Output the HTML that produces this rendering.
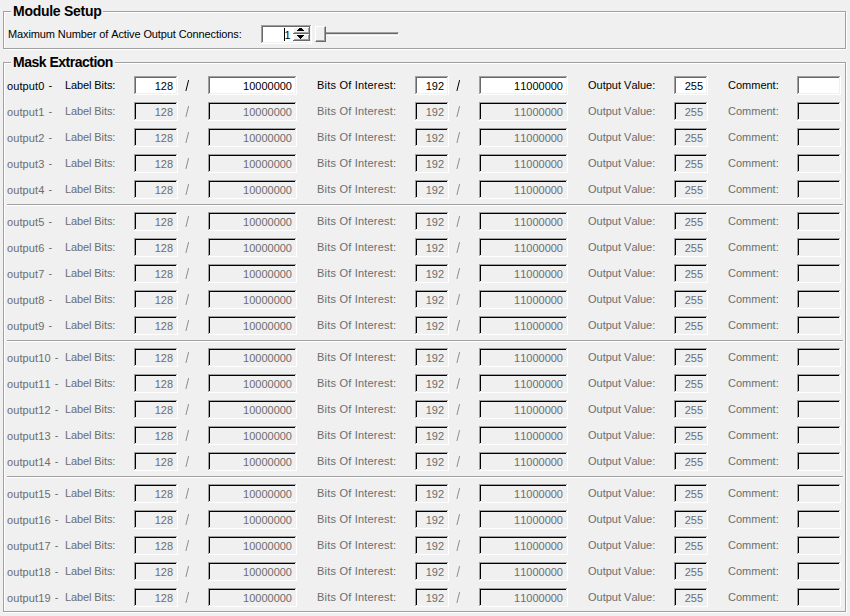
<!DOCTYPE html>
<html><head><meta charset="utf-8"><style>
*{margin:0;padding:0}
html,body{width:850px;height:616px;overflow:hidden;background:#f0f0f0}
body{position:relative;font-family:"Liberation Sans",sans-serif;font-size:11px;color:#000;font-kerning:none}
.a{position:absolute}
.t{position:absolute;white-space:nowrap;line-height:13px;font-size:11px}
.d{color:#6d6d6d}
.gw{position:absolute;border:1px solid #fff;box-sizing:border-box}
.gg{position:absolute;border:1px solid #a0a0a0;box-sizing:border-box}
.ttl{position:absolute;background:#f0f0f0;font-weight:bold;font-size:14px;line-height:16px;white-space:nowrap}
.e{position:absolute;height:19px;background:linear-gradient(#fff,#fff) 0 100%/100% 1px no-repeat,linear-gradient(#fff,#fff) 100% 0/1px 100% no-repeat,linear-gradient(#f0f0f0,#f0f0f0) 1px calc(100% - 1px)/calc(100% - 2px) 1px no-repeat,linear-gradient(#f0f0f0,#f0f0f0) calc(100% - 1px) 1px/1px calc(100% - 2px) no-repeat,linear-gradient(#a0a0a0,#a0a0a0) 0 0/100% 1px no-repeat,linear-gradient(#a0a0a0,#a0a0a0) 0 0/1px 100% no-repeat,linear-gradient(#696969,#696969) 1px 1px/100% 1px no-repeat,linear-gradient(#696969,#696969) 1px 1px/1px 100% no-repeat,#fff}
.e.x{background:linear-gradient(#fff,#fff) 0 100%/100% 1px no-repeat,linear-gradient(#fff,#fff) 100% 0/1px 100% no-repeat,linear-gradient(#a0a0a0,#a0a0a0) 0 0/100% 1px no-repeat,linear-gradient(#a0a0a0,#a0a0a0) 0 0/1px 100% no-repeat,linear-gradient(#000,#000) 1px 1px/calc(100% - 3px) 1px no-repeat,linear-gradient(#000,#000) 1px 1px/1px calc(100% - 3px) no-repeat,#f0f0f0}
.v{position:absolute;right:5px;top:4px;line-height:13px;white-space:nowrap}
.sep{position:absolute;left:7px;width:836px;height:2px;border-top:1px solid #a0a0a0;border-bottom:1px solid #fff;box-sizing:border-box}
.sl{position:absolute;width:5px;height:11px}
</style></head><body>
<div class="gw" style="left:4px;top:12px;width:843px;height:38px"></div>
<div class="gg" style="left:3px;top:11px;width:843px;height:38px"></div>
<div class="ttl" style="left:11px;top:3px;padding:0 1px 0 2px;letter-spacing:-0.27px">Module Setup</div>
<div class="gw" style="left:4px;top:63px;width:843px;height:550px"></div>
<div class="gg" style="left:3px;top:62px;width:843px;height:550px"></div>
<div class="ttl" style="left:11px;top:54px;padding:0 2px 0 2px;letter-spacing:-0.5px">Mask Extraction</div>
<div class="t" style="left:8px;top:28px;letter-spacing:-0.11px">Maximum Number of Active Output Connections:</div>
<div class="e" style="left:261px;top:25px;width:51px;height:19px"></div>
<div class="a" style="left:284px;top:28px;width:1px;height:13px;background:#000"></div>
<div class="t" style="left:284.4px;top:29px">1</div>
<svg class="a" style="left:293px;top:27px" width="17" height="14" shape-rendering="crispEdges"><rect x="0" y="0" width="17" height="7" fill="#fff"/><rect x="1" y="1" width="15" height="5" fill="#f0f0f0"/><rect x="15" y="1" width="1" height="5" fill="#a0a0a0"/><rect x="1" y="5" width="15" height="1" fill="#a0a0a0"/><rect x="16" y="0" width="1" height="7" fill="#696969"/><rect x="0" y="6" width="17" height="1" fill="#696969"/><rect x="0" y="7" width="17" height="7" fill="#fff"/><rect x="1" y="8" width="15" height="5" fill="#f0f0f0"/><rect x="15" y="8" width="1" height="5" fill="#a0a0a0"/><rect x="1" y="12" width="15" height="1" fill="#a0a0a0"/><rect x="16" y="7" width="1" height="7" fill="#696969"/><rect x="0" y="13" width="17" height="1" fill="#696969"/><rect x="6" y="1" width="3" height="1" fill="#000"/><rect x="5" y="2" width="5" height="1" fill="#000"/><rect x="4" y="3" width="7" height="1" fill="#000"/><rect x="4" y="8" width="7" height="1" fill="#000"/><rect x="5" y="9" width="5" height="1" fill="#000"/><rect x="6" y="10" width="3" height="1" fill="#000"/><rect x="7" y="11" width="1" height="1" fill="#000"/></svg>
<div class="a" style="left:320px;top:32px;width:79px;height:4px;box-sizing:border-box;border:1px solid;border-color:#a0a0a0 #fff #fff #a0a0a0;box-shadow:inset 1px 1px 0 #696969,inset -1px -1px 0 #e3e3e3"></div>
<div class="a" style="left:315px;top:26px;width:11px;height:16px;box-sizing:border-box;background:#f0f0f0;border:1px solid;border-color:#fff #696969 #696969 #fff;box-shadow:inset -1px -1px 0 #a0a0a0"></div>
<div class="sep" style="top:204px"></div>
<div class="sep" style="top:340px"></div>
<div class="sep" style="top:476px"></div>
<div class="t" style="left:7px;top:80px;letter-spacing:0.1px">output0<span style="margin-left:4px;position:relative;top:-1px">-</span></div>
<div class="t" style="left:65px;top:79px;letter-spacing:-0.1px">Label Bits:</div>
<div class="e" style="left:134px;top:76px;width:44px"><span class="v">128</span></div>
<svg class="sl" style="left:185px;top:80px" width="5" height="11"><line x1="0.9" y1="10.9" x2="3.6" y2="0.1" stroke="#000" stroke-width="1.0"/></svg>
<div class="e" style="left:208px;top:76px;width:89px"><span class="v">10000000</span></div>
<div class="t" style="left:317px;top:79px;letter-spacing:0.2px">Bits Of Interest:</div>
<div class="e" style="left:415px;top:76px;width:34px"><span class="v">192</span></div>
<svg class="sl" style="left:456px;top:80px" width="5" height="11"><line x1="0.9" y1="10.9" x2="3.6" y2="0.1" stroke="#000" stroke-width="1.0"/></svg>
<div class="e" style="left:479px;top:76px;width:89px"><span class="v">11000000</span></div>
<div class="t" style="left:588px;top:79px">Output Value:</div>
<div class="e" style="left:674px;top:76px;width:34px"><span class="v">255</span></div>
<div class="t" style="left:728px;top:79px">Comment:</div>
<div class="e" style="left:797px;top:76px;width:44px"></div>
<div class="t d" style="left:7px;top:106px;letter-spacing:0.1px">output1<span style="margin-left:4px;position:relative;top:-1px">-</span></div>
<div class="t d" style="left:65px;top:105px;letter-spacing:-0.1px">Label Bits:</div>
<div class="e x" style="left:134px;top:102px;width:44px"><span class="v d">128</span></div>
<svg class="sl" style="left:185px;top:106px" width="5" height="11"><line x1="0.9" y1="10.9" x2="3.6" y2="0.1" stroke="#8c8c8c" stroke-width="1.0"/></svg>
<div class="e x" style="left:208px;top:102px;width:89px"><span class="v d">10000000</span></div>
<div class="t d" style="left:317px;top:105px;letter-spacing:0.2px">Bits Of Interest:</div>
<div class="e x" style="left:415px;top:102px;width:34px"><span class="v d">192</span></div>
<svg class="sl" style="left:456px;top:106px" width="5" height="11"><line x1="0.9" y1="10.9" x2="3.6" y2="0.1" stroke="#8c8c8c" stroke-width="1.0"/></svg>
<div class="e x" style="left:479px;top:102px;width:89px"><span class="v d">11000000</span></div>
<div class="t d" style="left:588px;top:105px">Output Value:</div>
<div class="e x" style="left:674px;top:102px;width:34px"><span class="v d">255</span></div>
<div class="t d" style="left:728px;top:105px">Comment:</div>
<div class="e x" style="left:797px;top:102px;width:44px"></div>
<div class="t d" style="left:7px;top:132px;letter-spacing:0.1px">output2<span style="margin-left:4px;position:relative;top:-1px">-</span></div>
<div class="t d" style="left:65px;top:131px;letter-spacing:-0.1px">Label Bits:</div>
<div class="e x" style="left:134px;top:128px;width:44px"><span class="v d">128</span></div>
<svg class="sl" style="left:185px;top:132px" width="5" height="11"><line x1="0.9" y1="10.9" x2="3.6" y2="0.1" stroke="#8c8c8c" stroke-width="1.0"/></svg>
<div class="e x" style="left:208px;top:128px;width:89px"><span class="v d">10000000</span></div>
<div class="t d" style="left:317px;top:131px;letter-spacing:0.2px">Bits Of Interest:</div>
<div class="e x" style="left:415px;top:128px;width:34px"><span class="v d">192</span></div>
<svg class="sl" style="left:456px;top:132px" width="5" height="11"><line x1="0.9" y1="10.9" x2="3.6" y2="0.1" stroke="#8c8c8c" stroke-width="1.0"/></svg>
<div class="e x" style="left:479px;top:128px;width:89px"><span class="v d">11000000</span></div>
<div class="t d" style="left:588px;top:131px">Output Value:</div>
<div class="e x" style="left:674px;top:128px;width:34px"><span class="v d">255</span></div>
<div class="t d" style="left:728px;top:131px">Comment:</div>
<div class="e x" style="left:797px;top:128px;width:44px"></div>
<div class="t d" style="left:7px;top:158px;letter-spacing:0.1px">output3<span style="margin-left:4px;position:relative;top:-1px">-</span></div>
<div class="t d" style="left:65px;top:157px;letter-spacing:-0.1px">Label Bits:</div>
<div class="e x" style="left:134px;top:154px;width:44px"><span class="v d">128</span></div>
<svg class="sl" style="left:185px;top:158px" width="5" height="11"><line x1="0.9" y1="10.9" x2="3.6" y2="0.1" stroke="#8c8c8c" stroke-width="1.0"/></svg>
<div class="e x" style="left:208px;top:154px;width:89px"><span class="v d">10000000</span></div>
<div class="t d" style="left:317px;top:157px;letter-spacing:0.2px">Bits Of Interest:</div>
<div class="e x" style="left:415px;top:154px;width:34px"><span class="v d">192</span></div>
<svg class="sl" style="left:456px;top:158px" width="5" height="11"><line x1="0.9" y1="10.9" x2="3.6" y2="0.1" stroke="#8c8c8c" stroke-width="1.0"/></svg>
<div class="e x" style="left:479px;top:154px;width:89px"><span class="v d">11000000</span></div>
<div class="t d" style="left:588px;top:157px">Output Value:</div>
<div class="e x" style="left:674px;top:154px;width:34px"><span class="v d">255</span></div>
<div class="t d" style="left:728px;top:157px">Comment:</div>
<div class="e x" style="left:797px;top:154px;width:44px"></div>
<div class="t d" style="left:7px;top:184px;letter-spacing:0.1px">output4<span style="margin-left:4px;position:relative;top:-1px">-</span></div>
<div class="t d" style="left:65px;top:183px;letter-spacing:-0.1px">Label Bits:</div>
<div class="e x" style="left:134px;top:180px;width:44px"><span class="v d">128</span></div>
<svg class="sl" style="left:185px;top:184px" width="5" height="11"><line x1="0.9" y1="10.9" x2="3.6" y2="0.1" stroke="#8c8c8c" stroke-width="1.0"/></svg>
<div class="e x" style="left:208px;top:180px;width:89px"><span class="v d">10000000</span></div>
<div class="t d" style="left:317px;top:183px;letter-spacing:0.2px">Bits Of Interest:</div>
<div class="e x" style="left:415px;top:180px;width:34px"><span class="v d">192</span></div>
<svg class="sl" style="left:456px;top:184px" width="5" height="11"><line x1="0.9" y1="10.9" x2="3.6" y2="0.1" stroke="#8c8c8c" stroke-width="1.0"/></svg>
<div class="e x" style="left:479px;top:180px;width:89px"><span class="v d">11000000</span></div>
<div class="t d" style="left:588px;top:183px">Output Value:</div>
<div class="e x" style="left:674px;top:180px;width:34px"><span class="v d">255</span></div>
<div class="t d" style="left:728px;top:183px">Comment:</div>
<div class="e x" style="left:797px;top:180px;width:44px"></div>
<div class="t d" style="left:7px;top:216px;letter-spacing:0.1px">output5<span style="margin-left:4px;position:relative;top:-1px">-</span></div>
<div class="t d" style="left:65px;top:215px;letter-spacing:-0.1px">Label Bits:</div>
<div class="e x" style="left:134px;top:212px;width:44px"><span class="v d">128</span></div>
<svg class="sl" style="left:185px;top:216px" width="5" height="11"><line x1="0.9" y1="10.9" x2="3.6" y2="0.1" stroke="#8c8c8c" stroke-width="1.0"/></svg>
<div class="e x" style="left:208px;top:212px;width:89px"><span class="v d">10000000</span></div>
<div class="t d" style="left:317px;top:215px;letter-spacing:0.2px">Bits Of Interest:</div>
<div class="e x" style="left:415px;top:212px;width:34px"><span class="v d">192</span></div>
<svg class="sl" style="left:456px;top:216px" width="5" height="11"><line x1="0.9" y1="10.9" x2="3.6" y2="0.1" stroke="#8c8c8c" stroke-width="1.0"/></svg>
<div class="e x" style="left:479px;top:212px;width:89px"><span class="v d">11000000</span></div>
<div class="t d" style="left:588px;top:215px">Output Value:</div>
<div class="e x" style="left:674px;top:212px;width:34px"><span class="v d">255</span></div>
<div class="t d" style="left:728px;top:215px">Comment:</div>
<div class="e x" style="left:797px;top:212px;width:44px"></div>
<div class="t d" style="left:7px;top:242px;letter-spacing:0.1px">output6<span style="margin-left:4px;position:relative;top:-1px">-</span></div>
<div class="t d" style="left:65px;top:241px;letter-spacing:-0.1px">Label Bits:</div>
<div class="e x" style="left:134px;top:238px;width:44px"><span class="v d">128</span></div>
<svg class="sl" style="left:185px;top:242px" width="5" height="11"><line x1="0.9" y1="10.9" x2="3.6" y2="0.1" stroke="#8c8c8c" stroke-width="1.0"/></svg>
<div class="e x" style="left:208px;top:238px;width:89px"><span class="v d">10000000</span></div>
<div class="t d" style="left:317px;top:241px;letter-spacing:0.2px">Bits Of Interest:</div>
<div class="e x" style="left:415px;top:238px;width:34px"><span class="v d">192</span></div>
<svg class="sl" style="left:456px;top:242px" width="5" height="11"><line x1="0.9" y1="10.9" x2="3.6" y2="0.1" stroke="#8c8c8c" stroke-width="1.0"/></svg>
<div class="e x" style="left:479px;top:238px;width:89px"><span class="v d">11000000</span></div>
<div class="t d" style="left:588px;top:241px">Output Value:</div>
<div class="e x" style="left:674px;top:238px;width:34px"><span class="v d">255</span></div>
<div class="t d" style="left:728px;top:241px">Comment:</div>
<div class="e x" style="left:797px;top:238px;width:44px"></div>
<div class="t d" style="left:7px;top:268px;letter-spacing:0.1px">output7<span style="margin-left:4px;position:relative;top:-1px">-</span></div>
<div class="t d" style="left:65px;top:267px;letter-spacing:-0.1px">Label Bits:</div>
<div class="e x" style="left:134px;top:264px;width:44px"><span class="v d">128</span></div>
<svg class="sl" style="left:185px;top:268px" width="5" height="11"><line x1="0.9" y1="10.9" x2="3.6" y2="0.1" stroke="#8c8c8c" stroke-width="1.0"/></svg>
<div class="e x" style="left:208px;top:264px;width:89px"><span class="v d">10000000</span></div>
<div class="t d" style="left:317px;top:267px;letter-spacing:0.2px">Bits Of Interest:</div>
<div class="e x" style="left:415px;top:264px;width:34px"><span class="v d">192</span></div>
<svg class="sl" style="left:456px;top:268px" width="5" height="11"><line x1="0.9" y1="10.9" x2="3.6" y2="0.1" stroke="#8c8c8c" stroke-width="1.0"/></svg>
<div class="e x" style="left:479px;top:264px;width:89px"><span class="v d">11000000</span></div>
<div class="t d" style="left:588px;top:267px">Output Value:</div>
<div class="e x" style="left:674px;top:264px;width:34px"><span class="v d">255</span></div>
<div class="t d" style="left:728px;top:267px">Comment:</div>
<div class="e x" style="left:797px;top:264px;width:44px"></div>
<div class="t d" style="left:7px;top:294px;letter-spacing:0.1px">output8<span style="margin-left:4px;position:relative;top:-1px">-</span></div>
<div class="t d" style="left:65px;top:293px;letter-spacing:-0.1px">Label Bits:</div>
<div class="e x" style="left:134px;top:290px;width:44px"><span class="v d">128</span></div>
<svg class="sl" style="left:185px;top:294px" width="5" height="11"><line x1="0.9" y1="10.9" x2="3.6" y2="0.1" stroke="#8c8c8c" stroke-width="1.0"/></svg>
<div class="e x" style="left:208px;top:290px;width:89px"><span class="v d">10000000</span></div>
<div class="t d" style="left:317px;top:293px;letter-spacing:0.2px">Bits Of Interest:</div>
<div class="e x" style="left:415px;top:290px;width:34px"><span class="v d">192</span></div>
<svg class="sl" style="left:456px;top:294px" width="5" height="11"><line x1="0.9" y1="10.9" x2="3.6" y2="0.1" stroke="#8c8c8c" stroke-width="1.0"/></svg>
<div class="e x" style="left:479px;top:290px;width:89px"><span class="v d">11000000</span></div>
<div class="t d" style="left:588px;top:293px">Output Value:</div>
<div class="e x" style="left:674px;top:290px;width:34px"><span class="v d">255</span></div>
<div class="t d" style="left:728px;top:293px">Comment:</div>
<div class="e x" style="left:797px;top:290px;width:44px"></div>
<div class="t d" style="left:7px;top:320px;letter-spacing:0.1px">output9<span style="margin-left:4px;position:relative;top:-1px">-</span></div>
<div class="t d" style="left:65px;top:319px;letter-spacing:-0.1px">Label Bits:</div>
<div class="e x" style="left:134px;top:316px;width:44px"><span class="v d">128</span></div>
<svg class="sl" style="left:185px;top:320px" width="5" height="11"><line x1="0.9" y1="10.9" x2="3.6" y2="0.1" stroke="#8c8c8c" stroke-width="1.0"/></svg>
<div class="e x" style="left:208px;top:316px;width:89px"><span class="v d">10000000</span></div>
<div class="t d" style="left:317px;top:319px;letter-spacing:0.2px">Bits Of Interest:</div>
<div class="e x" style="left:415px;top:316px;width:34px"><span class="v d">192</span></div>
<svg class="sl" style="left:456px;top:320px" width="5" height="11"><line x1="0.9" y1="10.9" x2="3.6" y2="0.1" stroke="#8c8c8c" stroke-width="1.0"/></svg>
<div class="e x" style="left:479px;top:316px;width:89px"><span class="v d">11000000</span></div>
<div class="t d" style="left:588px;top:319px">Output Value:</div>
<div class="e x" style="left:674px;top:316px;width:34px"><span class="v d">255</span></div>
<div class="t d" style="left:728px;top:319px">Comment:</div>
<div class="e x" style="left:797px;top:316px;width:44px"></div>
<div class="t d" style="left:7px;top:352px;letter-spacing:0.1px">output10<span style="margin-left:4px;position:relative;top:-1px">-</span></div>
<div class="t d" style="left:65px;top:351px;letter-spacing:-0.1px">Label Bits:</div>
<div class="e x" style="left:134px;top:348px;width:44px"><span class="v d">128</span></div>
<svg class="sl" style="left:185px;top:352px" width="5" height="11"><line x1="0.9" y1="10.9" x2="3.6" y2="0.1" stroke="#8c8c8c" stroke-width="1.0"/></svg>
<div class="e x" style="left:208px;top:348px;width:89px"><span class="v d">10000000</span></div>
<div class="t d" style="left:317px;top:351px;letter-spacing:0.2px">Bits Of Interest:</div>
<div class="e x" style="left:415px;top:348px;width:34px"><span class="v d">192</span></div>
<svg class="sl" style="left:456px;top:352px" width="5" height="11"><line x1="0.9" y1="10.9" x2="3.6" y2="0.1" stroke="#8c8c8c" stroke-width="1.0"/></svg>
<div class="e x" style="left:479px;top:348px;width:89px"><span class="v d">11000000</span></div>
<div class="t d" style="left:588px;top:351px">Output Value:</div>
<div class="e x" style="left:674px;top:348px;width:34px"><span class="v d">255</span></div>
<div class="t d" style="left:728px;top:351px">Comment:</div>
<div class="e x" style="left:797px;top:348px;width:44px"></div>
<div class="t d" style="left:7px;top:378px;letter-spacing:0.1px">output11<span style="margin-left:4px;position:relative;top:-1px">-</span></div>
<div class="t d" style="left:65px;top:377px;letter-spacing:-0.1px">Label Bits:</div>
<div class="e x" style="left:134px;top:374px;width:44px"><span class="v d">128</span></div>
<svg class="sl" style="left:185px;top:378px" width="5" height="11"><line x1="0.9" y1="10.9" x2="3.6" y2="0.1" stroke="#8c8c8c" stroke-width="1.0"/></svg>
<div class="e x" style="left:208px;top:374px;width:89px"><span class="v d">10000000</span></div>
<div class="t d" style="left:317px;top:377px;letter-spacing:0.2px">Bits Of Interest:</div>
<div class="e x" style="left:415px;top:374px;width:34px"><span class="v d">192</span></div>
<svg class="sl" style="left:456px;top:378px" width="5" height="11"><line x1="0.9" y1="10.9" x2="3.6" y2="0.1" stroke="#8c8c8c" stroke-width="1.0"/></svg>
<div class="e x" style="left:479px;top:374px;width:89px"><span class="v d">11000000</span></div>
<div class="t d" style="left:588px;top:377px">Output Value:</div>
<div class="e x" style="left:674px;top:374px;width:34px"><span class="v d">255</span></div>
<div class="t d" style="left:728px;top:377px">Comment:</div>
<div class="e x" style="left:797px;top:374px;width:44px"></div>
<div class="t d" style="left:7px;top:404px;letter-spacing:0.1px">output12<span style="margin-left:4px;position:relative;top:-1px">-</span></div>
<div class="t d" style="left:65px;top:403px;letter-spacing:-0.1px">Label Bits:</div>
<div class="e x" style="left:134px;top:400px;width:44px"><span class="v d">128</span></div>
<svg class="sl" style="left:185px;top:404px" width="5" height="11"><line x1="0.9" y1="10.9" x2="3.6" y2="0.1" stroke="#8c8c8c" stroke-width="1.0"/></svg>
<div class="e x" style="left:208px;top:400px;width:89px"><span class="v d">10000000</span></div>
<div class="t d" style="left:317px;top:403px;letter-spacing:0.2px">Bits Of Interest:</div>
<div class="e x" style="left:415px;top:400px;width:34px"><span class="v d">192</span></div>
<svg class="sl" style="left:456px;top:404px" width="5" height="11"><line x1="0.9" y1="10.9" x2="3.6" y2="0.1" stroke="#8c8c8c" stroke-width="1.0"/></svg>
<div class="e x" style="left:479px;top:400px;width:89px"><span class="v d">11000000</span></div>
<div class="t d" style="left:588px;top:403px">Output Value:</div>
<div class="e x" style="left:674px;top:400px;width:34px"><span class="v d">255</span></div>
<div class="t d" style="left:728px;top:403px">Comment:</div>
<div class="e x" style="left:797px;top:400px;width:44px"></div>
<div class="t d" style="left:7px;top:430px;letter-spacing:0.1px">output13<span style="margin-left:4px;position:relative;top:-1px">-</span></div>
<div class="t d" style="left:65px;top:429px;letter-spacing:-0.1px">Label Bits:</div>
<div class="e x" style="left:134px;top:426px;width:44px"><span class="v d">128</span></div>
<svg class="sl" style="left:185px;top:430px" width="5" height="11"><line x1="0.9" y1="10.9" x2="3.6" y2="0.1" stroke="#8c8c8c" stroke-width="1.0"/></svg>
<div class="e x" style="left:208px;top:426px;width:89px"><span class="v d">10000000</span></div>
<div class="t d" style="left:317px;top:429px;letter-spacing:0.2px">Bits Of Interest:</div>
<div class="e x" style="left:415px;top:426px;width:34px"><span class="v d">192</span></div>
<svg class="sl" style="left:456px;top:430px" width="5" height="11"><line x1="0.9" y1="10.9" x2="3.6" y2="0.1" stroke="#8c8c8c" stroke-width="1.0"/></svg>
<div class="e x" style="left:479px;top:426px;width:89px"><span class="v d">11000000</span></div>
<div class="t d" style="left:588px;top:429px">Output Value:</div>
<div class="e x" style="left:674px;top:426px;width:34px"><span class="v d">255</span></div>
<div class="t d" style="left:728px;top:429px">Comment:</div>
<div class="e x" style="left:797px;top:426px;width:44px"></div>
<div class="t d" style="left:7px;top:456px;letter-spacing:0.1px">output14<span style="margin-left:4px;position:relative;top:-1px">-</span></div>
<div class="t d" style="left:65px;top:455px;letter-spacing:-0.1px">Label Bits:</div>
<div class="e x" style="left:134px;top:452px;width:44px"><span class="v d">128</span></div>
<svg class="sl" style="left:185px;top:456px" width="5" height="11"><line x1="0.9" y1="10.9" x2="3.6" y2="0.1" stroke="#8c8c8c" stroke-width="1.0"/></svg>
<div class="e x" style="left:208px;top:452px;width:89px"><span class="v d">10000000</span></div>
<div class="t d" style="left:317px;top:455px;letter-spacing:0.2px">Bits Of Interest:</div>
<div class="e x" style="left:415px;top:452px;width:34px"><span class="v d">192</span></div>
<svg class="sl" style="left:456px;top:456px" width="5" height="11"><line x1="0.9" y1="10.9" x2="3.6" y2="0.1" stroke="#8c8c8c" stroke-width="1.0"/></svg>
<div class="e x" style="left:479px;top:452px;width:89px"><span class="v d">11000000</span></div>
<div class="t d" style="left:588px;top:455px">Output Value:</div>
<div class="e x" style="left:674px;top:452px;width:34px"><span class="v d">255</span></div>
<div class="t d" style="left:728px;top:455px">Comment:</div>
<div class="e x" style="left:797px;top:452px;width:44px"></div>
<div class="t d" style="left:7px;top:488px;letter-spacing:0.1px">output15<span style="margin-left:4px;position:relative;top:-1px">-</span></div>
<div class="t d" style="left:65px;top:487px;letter-spacing:-0.1px">Label Bits:</div>
<div class="e x" style="left:134px;top:484px;width:44px"><span class="v d">128</span></div>
<svg class="sl" style="left:185px;top:488px" width="5" height="11"><line x1="0.9" y1="10.9" x2="3.6" y2="0.1" stroke="#8c8c8c" stroke-width="1.0"/></svg>
<div class="e x" style="left:208px;top:484px;width:89px"><span class="v d">10000000</span></div>
<div class="t d" style="left:317px;top:487px;letter-spacing:0.2px">Bits Of Interest:</div>
<div class="e x" style="left:415px;top:484px;width:34px"><span class="v d">192</span></div>
<svg class="sl" style="left:456px;top:488px" width="5" height="11"><line x1="0.9" y1="10.9" x2="3.6" y2="0.1" stroke="#8c8c8c" stroke-width="1.0"/></svg>
<div class="e x" style="left:479px;top:484px;width:89px"><span class="v d">11000000</span></div>
<div class="t d" style="left:588px;top:487px">Output Value:</div>
<div class="e x" style="left:674px;top:484px;width:34px"><span class="v d">255</span></div>
<div class="t d" style="left:728px;top:487px">Comment:</div>
<div class="e x" style="left:797px;top:484px;width:44px"></div>
<div class="t d" style="left:7px;top:514px;letter-spacing:0.1px">output16<span style="margin-left:4px;position:relative;top:-1px">-</span></div>
<div class="t d" style="left:65px;top:513px;letter-spacing:-0.1px">Label Bits:</div>
<div class="e x" style="left:134px;top:510px;width:44px"><span class="v d">128</span></div>
<svg class="sl" style="left:185px;top:514px" width="5" height="11"><line x1="0.9" y1="10.9" x2="3.6" y2="0.1" stroke="#8c8c8c" stroke-width="1.0"/></svg>
<div class="e x" style="left:208px;top:510px;width:89px"><span class="v d">10000000</span></div>
<div class="t d" style="left:317px;top:513px;letter-spacing:0.2px">Bits Of Interest:</div>
<div class="e x" style="left:415px;top:510px;width:34px"><span class="v d">192</span></div>
<svg class="sl" style="left:456px;top:514px" width="5" height="11"><line x1="0.9" y1="10.9" x2="3.6" y2="0.1" stroke="#8c8c8c" stroke-width="1.0"/></svg>
<div class="e x" style="left:479px;top:510px;width:89px"><span class="v d">11000000</span></div>
<div class="t d" style="left:588px;top:513px">Output Value:</div>
<div class="e x" style="left:674px;top:510px;width:34px"><span class="v d">255</span></div>
<div class="t d" style="left:728px;top:513px">Comment:</div>
<div class="e x" style="left:797px;top:510px;width:44px"></div>
<div class="t d" style="left:7px;top:540px;letter-spacing:0.1px">output17<span style="margin-left:4px;position:relative;top:-1px">-</span></div>
<div class="t d" style="left:65px;top:539px;letter-spacing:-0.1px">Label Bits:</div>
<div class="e x" style="left:134px;top:536px;width:44px"><span class="v d">128</span></div>
<svg class="sl" style="left:185px;top:540px" width="5" height="11"><line x1="0.9" y1="10.9" x2="3.6" y2="0.1" stroke="#8c8c8c" stroke-width="1.0"/></svg>
<div class="e x" style="left:208px;top:536px;width:89px"><span class="v d">10000000</span></div>
<div class="t d" style="left:317px;top:539px;letter-spacing:0.2px">Bits Of Interest:</div>
<div class="e x" style="left:415px;top:536px;width:34px"><span class="v d">192</span></div>
<svg class="sl" style="left:456px;top:540px" width="5" height="11"><line x1="0.9" y1="10.9" x2="3.6" y2="0.1" stroke="#8c8c8c" stroke-width="1.0"/></svg>
<div class="e x" style="left:479px;top:536px;width:89px"><span class="v d">11000000</span></div>
<div class="t d" style="left:588px;top:539px">Output Value:</div>
<div class="e x" style="left:674px;top:536px;width:34px"><span class="v d">255</span></div>
<div class="t d" style="left:728px;top:539px">Comment:</div>
<div class="e x" style="left:797px;top:536px;width:44px"></div>
<div class="t d" style="left:7px;top:566px;letter-spacing:0.1px">output18<span style="margin-left:4px;position:relative;top:-1px">-</span></div>
<div class="t d" style="left:65px;top:565px;letter-spacing:-0.1px">Label Bits:</div>
<div class="e x" style="left:134px;top:562px;width:44px"><span class="v d">128</span></div>
<svg class="sl" style="left:185px;top:566px" width="5" height="11"><line x1="0.9" y1="10.9" x2="3.6" y2="0.1" stroke="#8c8c8c" stroke-width="1.0"/></svg>
<div class="e x" style="left:208px;top:562px;width:89px"><span class="v d">10000000</span></div>
<div class="t d" style="left:317px;top:565px;letter-spacing:0.2px">Bits Of Interest:</div>
<div class="e x" style="left:415px;top:562px;width:34px"><span class="v d">192</span></div>
<svg class="sl" style="left:456px;top:566px" width="5" height="11"><line x1="0.9" y1="10.9" x2="3.6" y2="0.1" stroke="#8c8c8c" stroke-width="1.0"/></svg>
<div class="e x" style="left:479px;top:562px;width:89px"><span class="v d">11000000</span></div>
<div class="t d" style="left:588px;top:565px">Output Value:</div>
<div class="e x" style="left:674px;top:562px;width:34px"><span class="v d">255</span></div>
<div class="t d" style="left:728px;top:565px">Comment:</div>
<div class="e x" style="left:797px;top:562px;width:44px"></div>
<div class="t d" style="left:7px;top:592px;letter-spacing:0.1px">output19<span style="margin-left:4px;position:relative;top:-1px">-</span></div>
<div class="t d" style="left:65px;top:591px;letter-spacing:-0.1px">Label Bits:</div>
<div class="e x" style="left:134px;top:588px;width:44px"><span class="v d">128</span></div>
<svg class="sl" style="left:185px;top:592px" width="5" height="11"><line x1="0.9" y1="10.9" x2="3.6" y2="0.1" stroke="#8c8c8c" stroke-width="1.0"/></svg>
<div class="e x" style="left:208px;top:588px;width:89px"><span class="v d">10000000</span></div>
<div class="t d" style="left:317px;top:591px;letter-spacing:0.2px">Bits Of Interest:</div>
<div class="e x" style="left:415px;top:588px;width:34px"><span class="v d">192</span></div>
<svg class="sl" style="left:456px;top:592px" width="5" height="11"><line x1="0.9" y1="10.9" x2="3.6" y2="0.1" stroke="#8c8c8c" stroke-width="1.0"/></svg>
<div class="e x" style="left:479px;top:588px;width:89px"><span class="v d">11000000</span></div>
<div class="t d" style="left:588px;top:591px">Output Value:</div>
<div class="e x" style="left:674px;top:588px;width:34px"><span class="v d">255</span></div>
<div class="t d" style="left:728px;top:591px">Comment:</div>
<div class="e x" style="left:797px;top:588px;width:44px"></div>
</body></html>
